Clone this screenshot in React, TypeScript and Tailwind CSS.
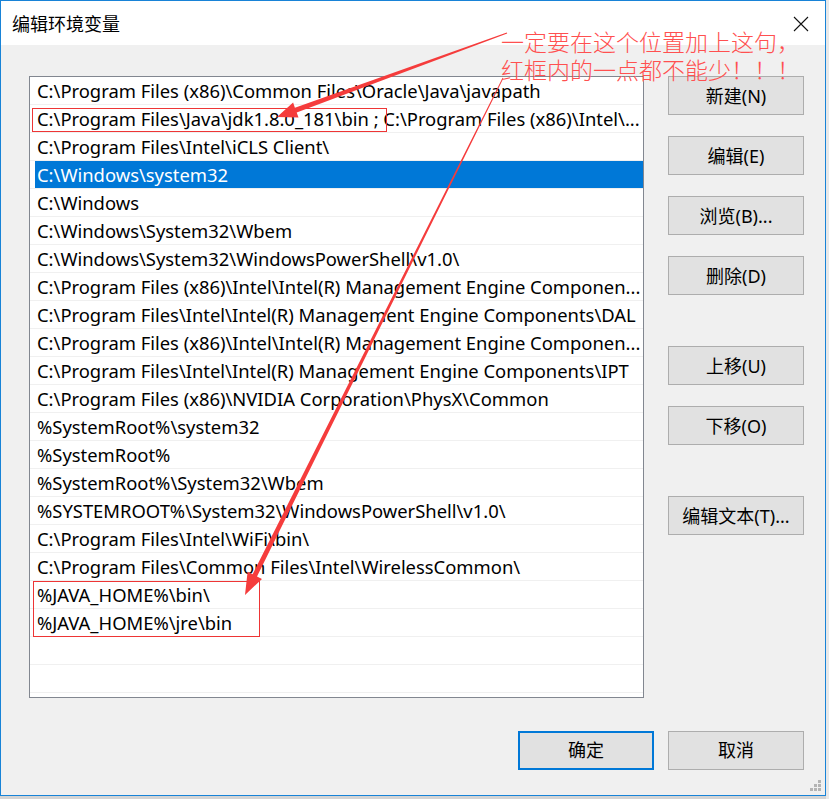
import React from "react";

const paths = [
  "C:\\Program Files (x86)\\Common Files\\Oracle\\Java\\javapath",
  "C:\\Program Files\\Java\\jdk1.8.0_181\\bin ; C:\\Program Files (x86)\\Intel\\...",
  "C:\\Program Files\\Intel\\iCLS Client\\",
  "C:\\Windows\\system32",
  "C:\\Windows",
  "C:\\Windows\\System32\\Wbem",
  "C:\\Windows\\System32\\WindowsPowerShell\\v1.0\\",
  "C:\\Program Files (x86)\\Intel\\Intel(R) Management Engine Componen...",
  "C:\\Program Files\\Intel\\Intel(R) Management Engine Components\\DAL",
  "C:\\Program Files (x86)\\Intel\\Intel(R) Management Engine Componen...",
  "C:\\Program Files\\Intel\\Intel(R) Management Engine Components\\IPT",
  "C:\\Program Files (x86)\\NVIDIA Corporation\\PhysX\\Common",
  "%SystemRoot%\\system32",
  "%SystemRoot%",
  "%SystemRoot%\\System32\\Wbem",
  "%SYSTEMROOT%\\System32\\WindowsPowerShell\\v1.0\\",
  "C:\\Program Files\\Intel\\WiFi\\bin\\",
  "C:\\Program Files\\Common Files\\Intel\\WirelessCommon\\",
  "%JAVA_HOME%\\bin\\",
  "%JAVA_HOME%\\jre\\bin",
  "",
  "",
  "",
];

const SELECTED = 3;

function SideButton({ label, className = "" }: { label: string; className?: string }) {
  return (
    <button
      className={`w-[136px] h-[39px] shrink-0 border border-[#adadad] bg-[#e1e1e1] text-[18px] text-black leading-none ${className}`}
    >
      {label}
    </button>
  );
}

function Arrows() {
  return (
    <svg
      className="absolute left-0 top-0 pointer-events-none"
      width="829"
      height="799"
      viewBox="0 0 829 799"
    >
      <polygon
        fill="#f53c3c"
        points="507.2,33.5 506.8,32.5 294.9,107.8 293.1,102.6 277,117 298.5,117.6 296.7,112.5"
      />
      <polygon
        fill="#f53c3c"
        points="503.4,78.2 502.6,77.8 252.6,574.2 247.6,571.7 245,595 262,578.9 257,576.4"
      />
    </svg>
  );
}

export default function App() {
  return (
    <div
      className="relative w-[829px] h-[799px] overflow-hidden bg-[#d4d4d4]"
      style={{ fontFamily: '"Noto Sans", "Noto Sans CJK SC", sans-serif' }}
    >
      {/* window behind, right edge */}
      <div className="absolute right-0 top-0 w-[3px] h-full bg-[#e9e9e9]" />

      <div className="relative w-[826px] h-[796px] border border-[#1883d7] bg-[#f0f0f0] flex flex-col">
        {/* title bar */}
        <div className="h-[44px] bg-white flex items-center justify-between shrink-0">
          <span className="pl-[11px] text-[18px] text-black" style={{ fontFamily: '"Noto Sans CJK SC", sans-serif' }}>
            编辑环境变量
          </span>
          <svg width="16" height="16" viewBox="0 0 16 16" className="mr-[16px] mt-[2px]">
            <path d="M1 1 L15 15 M15 1 L1 15" stroke="#111" strokeWidth="1.1" fill="none" />
          </svg>
        </div>

        {/* body */}
        <div className="flex pl-[28px] pt-[31px] gap-[24px]">
          <div className="w-[615px] h-[622px] border border-[#828790] bg-white overflow-hidden">
            {paths.map((p, i) => (
              <div key={i} className="h-[28px] border-b border-[#f0f0f0] flex">
                <div
                  className={`ml-[5px] flex-1 flex items-center pl-[2px] pt-[1px] text-[18.4px] whitespace-nowrap overflow-hidden ${
                    i === SELECTED ? "bg-[#0078d7] text-white" : "text-black"
                  }`}
                >
                  {p}
                </div>
              </div>
            ))}
          </div>

          <div className="flex flex-col">
            <SideButton label="新建(N)" />
            <SideButton label="编辑(E)" className="mt-[21px]" />
            <SideButton label="浏览(B)..." className="mt-[21px]" />
            <SideButton label="删除(D)" className="mt-[21px]" />
            <SideButton label="上移(U)" className="mt-[51px]" />
            <SideButton label="下移(O)" className="mt-[21px]" />
            <SideButton label="编辑文本(T)..." className="mt-[51px]" />
          </div>
        </div>

        {/* footer buttons */}
        <div className="flex justify-end gap-[14px] pr-[21px] pt-[33px]">
          <button className="w-[136px] h-[39px] border-2 border-[#0078d7] bg-[#e1e1e1] text-[18px] text-black">
            确定
          </button>
          <button className="w-[136px] h-[39px] border border-[#adadad] bg-[#e1e1e1] text-[18px] text-black">
            取消
          </button>
        </div>

        {/* resize grip */}
        <svg width="12" height="12" viewBox="0 0 12 12" className="absolute right-[3px] bottom-[3px]">
          <rect x="8" y="0" width="3" height="3" fill="#b4b4b4" />
          <rect x="4" y="4" width="3" height="3" fill="#b4b4b4" />
          <rect x="8" y="4" width="3" height="3" fill="#b4b4b4" />
          <rect x="0" y="8" width="3" height="3" fill="#b4b4b4" />
          <rect x="4" y="8" width="3" height="3" fill="#b4b4b4" />
          <rect x="8" y="8" width="3" height="3" fill="#b4b4b4" />
        </svg>
      </div>

      {/* annotation boxes */}
      <div className="absolute left-[32px] top-[108px] w-[355px] h-[24px] border border-[#ee3535] pointer-events-none" />
      <div className="absolute left-[33px] top-[581px] w-[227px] h-[56px] border border-[#ee3535] pointer-events-none" />

      <Arrows />

      {/* annotation text */}
      <div
        className="absolute left-[501px] top-[27px] text-[23px] leading-[28px] text-[#ff5050] font-light whitespace-nowrap"
        style={{ fontFamily: '"Noto Sans CJK SC", sans-serif' }}
      >
        <div>一定要在这个位置加上这句，</div>
        <div>红框内的一点都不能少！！！</div>
      </div>
    </div>
  );
}
